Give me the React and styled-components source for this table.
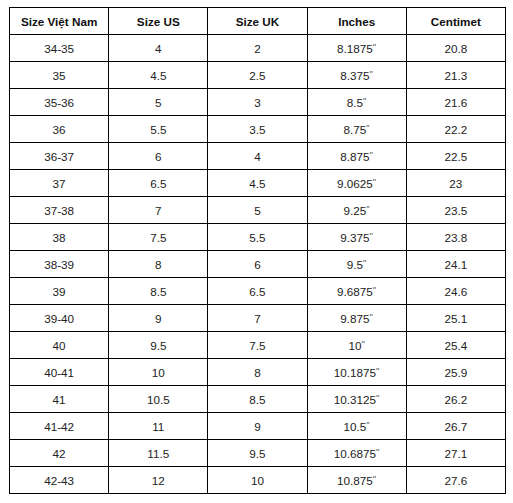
import React from 'react'
import styled, { createGlobalStyle } from 'styled-components'

const GlobalStyle = createGlobalStyle`
    html, body {
        margin: 0;
        padding: 0;
        background: #ffffff;
    }
    body {
        font-family: "Liberation Sans", Arial, sans-serif;
    }
`

const headers = ['Size Việt Nam', 'Size US', 'Size UK', 'Inches', 'Centimet']

const rows = [
    ['34-35', '4', '2', '8.1875"', '20.8'],
    ['35', '4.5', '2.5', '8.375"', '21.3'],
    ['35-36', '5', '3', '8.5"', '21.6'],
    ['36', '5.5', '3.5', '8.75"', '22.2'],
    ['36-37', '6', '4', '8.875"', '22.5'],
    ['37', '6.5', '4.5', '9.0625"', '23'],
    ['37-38', '7', '5', '9.25"', '23.5'],
    ['38', '7.5', '5.5', '9.375"', '23.8'],
    ['38-39', '8', '6', '9.5"', '24.1'],
    ['39', '8.5', '6.5', '9.6875"', '24.6'],
    ['39-40', '9', '7', '9.875"', '25.1'],
    ['40', '9.5', '7.5', '10"', '25.4'],
    ['40-41', '10', '8', '10.1875"', '25.9'],
    ['41', '10.5', '8.5', '10.3125"', '26.2'],
    ['41-42', '11', '9', '10.5"', '26.7'],
    ['42', '11.5', '9.5', '10.6875"', '27.1'],
    ['42-43', '12', '10', '10.875"', '27.6'],
]

const Page = styled.div`
    padding: 7px 0 0 9px;
`

const SizeTable = styled.table`
    border-collapse: collapse;
    table-layout: fixed;
    width: 497px;
    font-size: 11.7px;
    color: #111111;
`

const HeadCell = styled.th`
    border: 1px solid #000000;
    height: 26px;
    padding: 0 4px;
    font-weight: bold;
    text-align: center;
    vertical-align: middle;
`

const Cell = styled.td`
    border: 1px solid #000000;
    height: 26px;
    padding: 0 4px;
    text-align: center;
    vertical-align: middle;
    color: #222222;
`

const Inch = styled.span`
    font-size: 0.8em;
    vertical-align: 0.3em;
    color: #555555;
`

function renderValue(v) {
    if (v.endsWith('"')) {
        return <>{v.slice(0, -1)}<Inch>"</Inch></>
    }
    return v
}

export default function App() {
    return (
        <Page>
            <GlobalStyle />
            <SizeTable>
                <thead>
                    <tr>
                        {headers.map(h => <HeadCell key={h}>{h}</HeadCell>)}
                    </tr>
                </thead>
                <tbody>
                    {rows.map((r, i) => (
                        <tr key={i}>
                            {r.map((v, j) => <Cell key={j}>{renderValue(v)}</Cell>)}
                        </tr>
                    ))}
                </tbody>
            </SizeTable>
        </Page>
    )
}
